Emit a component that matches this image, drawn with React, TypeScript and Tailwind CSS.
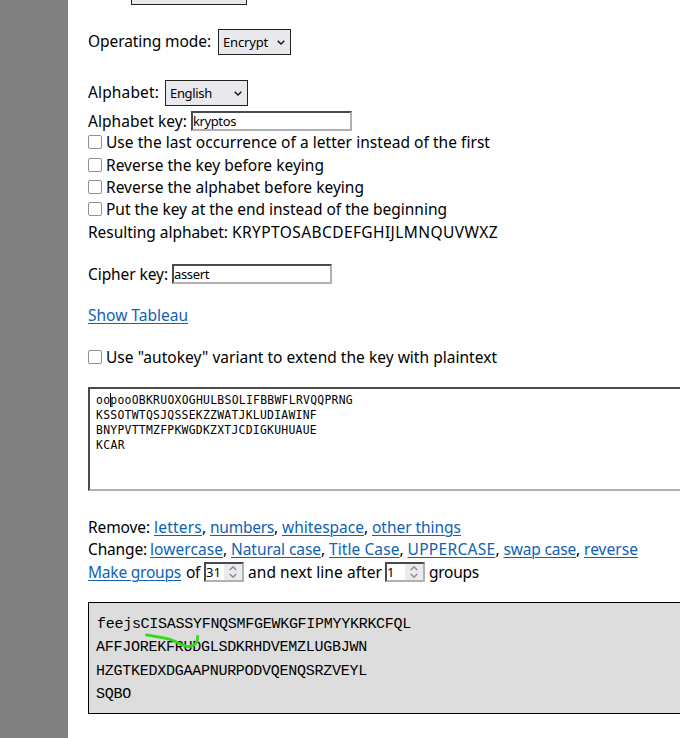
import { useLayoutEffect, useRef, useState } from "react";
import type { ReactNode } from "react";

/** Single-line text whose tracking is computed so it fills its column. */
function Fit({ className = "", children }: { className?: string; children: string }) {
  const box = useRef<HTMLSpanElement>(null);
  const inner = useRef<HTMLSpanElement>(null);
  const [tracking, setTracking] = useState(0);
  useLayoutEffect(() => {
    if (box.current && inner.current) {
      const room = box.current.getBoundingClientRect().width;
      const natural = inner.current.getBoundingClientRect().width;
      setTracking((room - natural) / children.length);
    }
  }, [children]);
  return (
    <span ref={box} className={`block shrink-0 whitespace-pre ${className}`}>
      <span ref={inner} style={{ letterSpacing: tracking }}>
        {children}
      </span>
    </span>
  );
}

function Link({ className, children }: { className: string; children: string }) {
  return (
    <a className="block text-[#0f62b4] underline decoration-1 underline-offset-2">
      <Fit className={className}>{children}</Fit>
    </a>
  );
}

function Comma() {
  return <span className="w-2 shrink-0">,</span>;
}

function Row({ className, children }: { className: string; children: ReactNode }) {
  return <div className={`flex items-center ${className}`}>{children}</div>;
}

function Select({ className, text, label }: { className: string; text: string; label: string }) {
  return (
    <div className={`flex h-[26px] shrink-0 items-center justify-between border border-[#222] bg-[#e9e9ed] pr-[5px] pl-1 text-[13px] ${className}`}>
      <Fit className={text}>{label}</Fit>
      <svg className="h-[5px] w-2" viewBox="0 0 8 5" fill="none" stroke="#111" strokeWidth="1.4">
        <path d="M.7.7 4 4 7.3.7" />
      </svg>
    </div>
  );
}

const inset = "border-2 border-t-[#4a4a4a] border-l-[#4a4a4a] border-r-[#b0b0b0] border-b-[#b0b0b0]";

function Field({ className, text, value }: { className: string; text: string; value: string }) {
  return (
    <div className={`flex h-5 shrink-0 items-center bg-white text-[13px] leading-4 ${inset} ${className}`}>
      <Fit className={text}>{value}</Fit>
    </div>
  );
}

function NumberField({ text, value }: { text: string; value: string }) {
  return (
    <div className={`flex h-5 w-10 shrink-0 items-center justify-between bg-white text-[13px] leading-4 ${inset}`}>
      <Fit className={text}>{value}</Fit>
      <span className="flex h-4 w-[18px] items-center justify-center bg-[#ebebef]">
        <svg className="h-3 w-2" viewBox="0 0 8 12" fill="none" stroke="#8e8e94" strokeWidth="1.5">
          <path d="M.7 4 4 .9 7.3 4M.7 8 4 11.1 7.3 8" />
        </svg>
      </span>
    </div>
  );
}

function Check({ text, label }: { text: string; label: string }) {
  return (
    <>
      <span className="mr-1 size-[14px] shrink-0 rounded-[2px] border border-[#8f8f9d] bg-white" />
      <Fit className={text}>{label}</Fit>
    </>
  );
}

export default function App() {
  return (
    <div className="flex h-[738px] w-[680px] overflow-hidden bg-white font-['Noto_Sans',sans-serif] text-[15.5px] leading-[22px] text-black">
      <aside className="w-[68px] shrink-0 bg-[#808080]" />
      <main className="w-[612px] shrink-0 pl-5">
        <div className="ml-[43px] h-[5px] w-[116px] border border-t-0 border-[#222] bg-[#e9e9ed]" />
        <Row className="mt-6 h-[26px]">
          <Fit className="mr-[7px] w-[123px] pb-0.5">Operating mode:</Fit>
          <Select className="w-[73px]" text="w-[45px]" label="Encrypt" />
        </Row>
        <Row className="mt-[25px] h-[26px]">
          <Fit className="mr-[6px] w-[71px] pb-0.5">Alphabet:</Fit>
          <Select className="w-[83px]" text="w-[42px]" label="English" />
        </Row>
        <Row className="mt-[5px] h-5">
          <Fit className="mr-1 w-[99px]">Alphabet key:</Fit>
          <Field className="w-[161px]" text="w-[43px]" value="kryptos" />
        </Row>
        <Row className="h-[22px]">
          <Check text="w-[384px]" label="Use the last occurrence of a letter instead of the first" />
        </Row>
        <Row className="mt-px h-[22px]">
          <Check text="w-[218px]" label="Reverse the key before keying" />
        </Row>
        <Row className="h-[22px]">
          <Check text="w-[258px]" label="Reverse the alphabet before keying" />
        </Row>
        <Row className="h-[22px]">
          <Check text="w-[341px]" label="Put the key at the end instead of the beginning" />
        </Row>
        <Row className="h-[23px]">
          <Fit className="mr-1 w-[140px]">Resulting alphabet:</Fit>
          <Fit className="w-[266px]">KRYPTOSABCDEFGHIJLMNQUVWXZ</Fit>
        </Row>
        <Row className="mt-[21px] h-5">
          <Fit className="mr-1 w-20">Cipher key:</Fit>
          <Field className="w-40" text="w-[35px]" value="assert" />
        </Row>
        <Row className="mt-5 h-[22px]">
          <Link className="w-[100px]">Show Tableau</Link>
        </Row>
        <Row className="mt-5 h-[22px]">
          <Check text="w-[391px]" label={'Use "autokey" variant to extend the key with plaintext'} />
        </Row>
        <div className={`relative mt-[19px] h-[104px] border-r-0 bg-white pt-1 pl-[6px] font-['DejaVu_Sans_Mono',monospace] text-[11.4px] leading-[15px] ${inset}`}>
          <Fit className="w-[257px]">oopooOBKRUOXOGHULBSOLIFBBWFLRVQQPRNG</Fit>
          <Fit className="w-[221px]">KSSOTWTQSJQSSEKZZWATJKLUDIAWINF</Fit>
          <Fit className="w-[221px]">BNYPVTTMZFPKWGDKZXTJCDIGKUHUAUE</Fit>
          <Fit className="w-[29px]">KCAR</Fit>
          <span className="absolute top-1 left-5 h-[14px] w-px bg-black" />
        </div>
        <Row className="mt-[25px] h-[22px]">
          <Fit className="mr-[4px] w-[62px]">Remove:</Fit>
          <Link className="w-12">letters</Link>
          <Comma />
          <Link className="w-16">numbers</Link>
          <Comma />
          <Link className="w-[82px]">whitespace</Link>
          <Comma />
          <Link className="w-[89px]">other things</Link>
        </Row>
        <Row className="h-[22px]">
          <Fit className="mr-[3px] w-[59px]">Change:</Fit>
          <Link className="w-[73px]">lowercase</Link>
          <Comma />
          <Link className="w-[90px]">Natural case</Link>
          <Comma />
          <Link className="w-[70.5px]">Title Case</Link>
          <Comma />
          <Link className="w-[88px]">UPPERCASE</Link>
          <Comma />
          <Link className="w-[72.5px]">swap case</Link>
          <Comma />
          <Link className="w-[54px]">reverse</Link>
        </Row>
        <Row className="h-6">
          <Link className="w-[93px]">Make groups</Link>
          <Fit className="mr-1 ml-[5px] w-[14px]">of</Fit>
          <NumberField text="w-[15px]" value="31" />
          <Fit className="mr-[3px] ml-1 w-[134px]">and next line after</Fit>
          <NumberField text="w-2" value="1" />
          <Fit className="ml-1 w-[50px]">groups</Fit>
        </Row>
        <div className="relative mt-[18px] h-[112px] border border-r-0 border-black bg-[#ddd] pt-[10px] pl-[7px] font-['Liberation_Mono',monospace] text-[15px] leading-[23.4px]">
          <Fit className="ml-px w-[314px]">feejsCISASSYFNQSMFGEWKGFIPMYYKRKCFQL</Fit>
          <Fit className="w-[271px]">AFFJOREKFRUDGLSDKRHDVEMZLUGBJWN</Fit>
          <Fit className="w-[271px]">HZGTKEDXDGAAPNURPODVQENQSRZVEYL</Fit>
          <Fit className="w-[35px]">SQBO</Fit>
          <svg className="absolute top-[28px] left-[54px] h-5 w-[60px]" viewBox="0 0 60 20" fill="none" stroke="#32dc14" strokeWidth="2.8" strokeLinecap="round" strokeLinejoin="round">
            <path d="M3.5 4C13 5.5 23 7 30 9.5C37 12 40 15.5 46 15.5C52 15 55 11 54.5 5.5" />
          </svg>
        </div>
      </main>
    </div>
  );
}
